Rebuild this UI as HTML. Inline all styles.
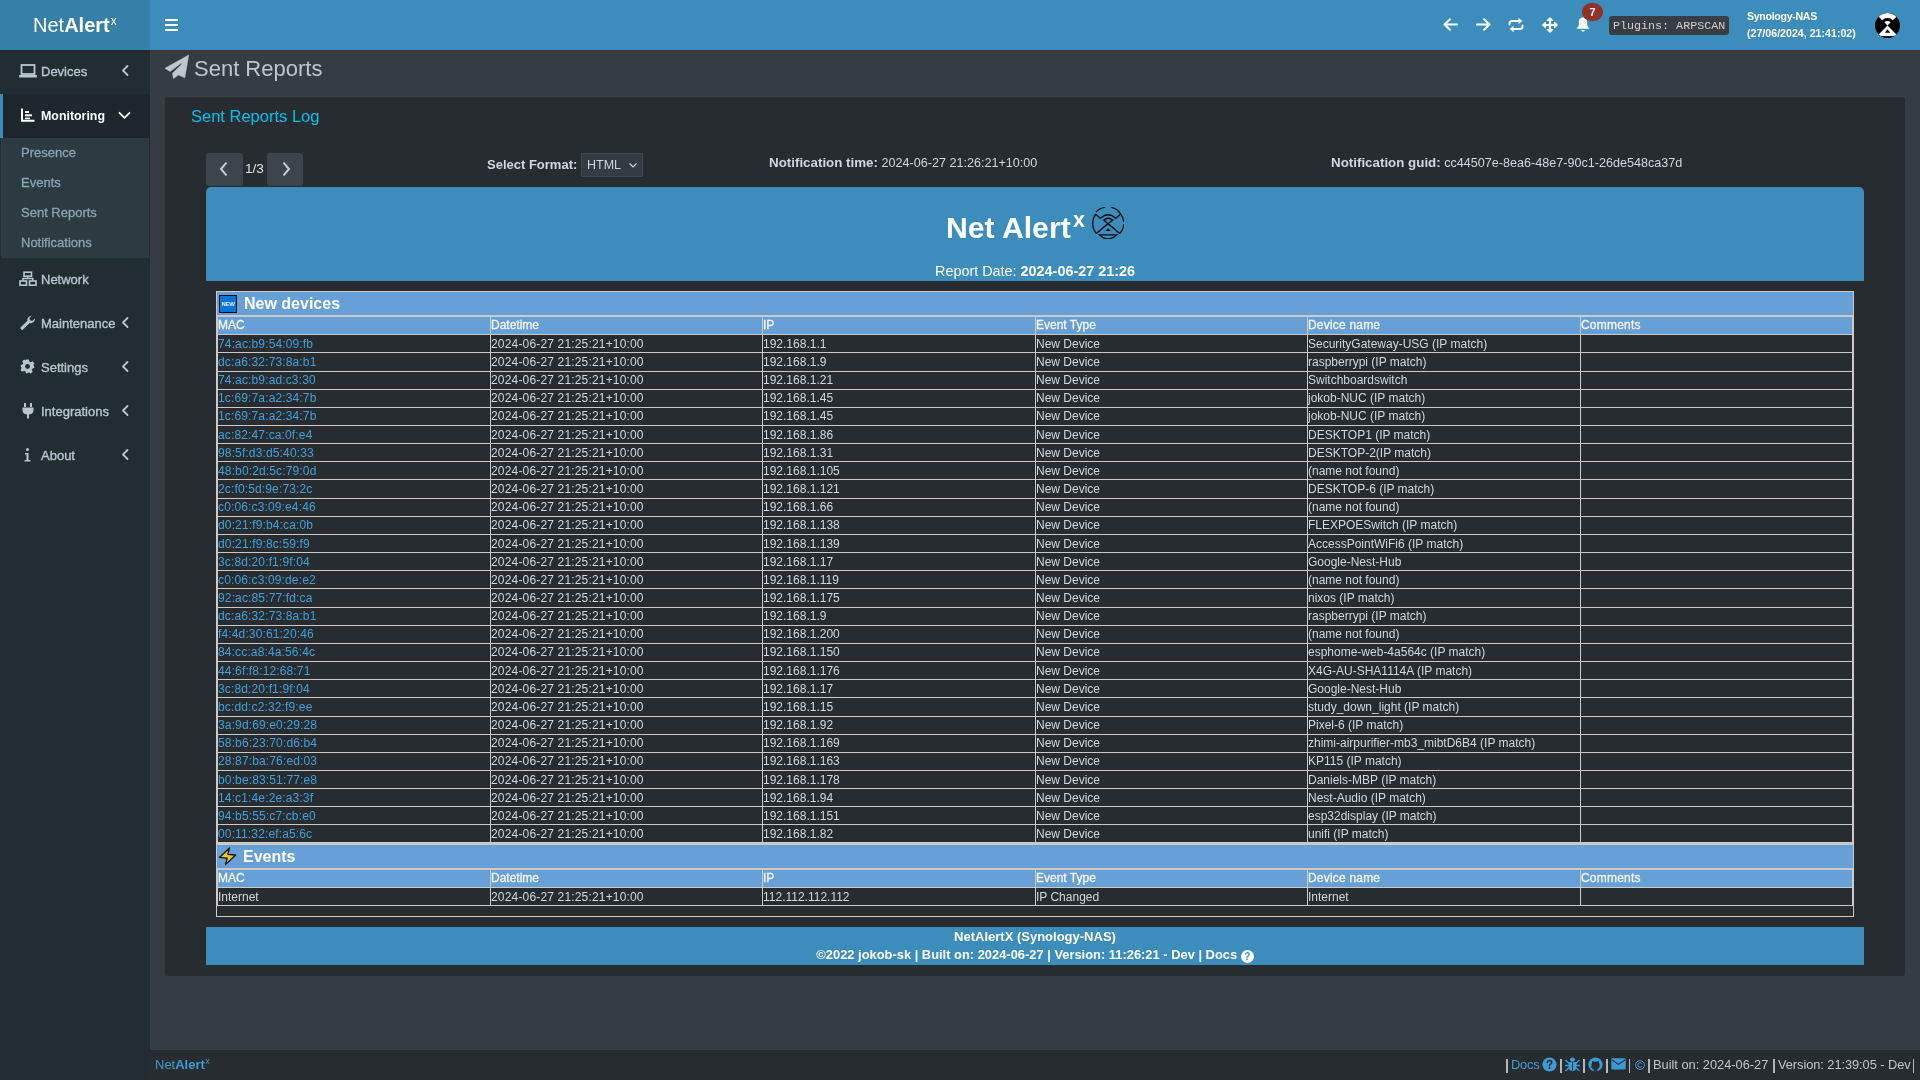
<!DOCTYPE html>
<html><head><meta charset="utf-8"><style>
*{margin:0;padding:0;box-sizing:border-box}
html,body{width:1920px;height:1080px;overflow:hidden;background:#353c42;font-family:"Liberation Sans",sans-serif}
.a{position:absolute;white-space:nowrap}
.side{position:absolute;left:0;top:50px;width:150px;height:1030px;background:#222d32}
.sb{color:#b8c7ce;font-size:13px;-webkit-text-stroke:0.35px #b8c7ce}
.tv{color:#8aa4af;font-size:13px;-webkit-text-stroke:0.3px #8aa4af}
.t td{}
.cell{position:absolute;font-size:12px;color:#d4d8de;line-height:14px;white-space:nowrap;overflow:hidden}
.lnk{color:#40a0d8}
.hl{position:absolute;height:1px;background:#ccc9c6}
.vl{position:absolute;width:1px;background:#ccc9c6}
</style></head><body><div id="w" style="position:absolute;left:0;top:0;width:1920px;height:1080px;will-change:transform">

<div class="a" style="left:0;top:0;width:1920px;height:50px;background:#3c8dbc"></div>
<div class="a" style="left:0;top:0;width:150px;height:50px;background:#367fa9"></div>
<div class="a" style="left:33px;top:12.5px;font-size:20px;color:#fff;line-height:24px">Net<b>Alert</b><span style="font-size:12px;position:relative;top:-7px;margin-left:1px">x</span></div>
<div class="a" style="left:165px;top:19px;width:13px;height:2px;background:#fff"></div>
<div class="a" style="left:165px;top:24px;width:13px;height:2px;background:#fff"></div>
<div class="a" style="left:165px;top:29px;width:13px;height:2px;background:#fff"></div>
<svg class="a" style="left:1443px;top:18px" width="15" height="13" viewBox="0 0 15 13"><path d="M7 1.2 L1.5 6.5 L7 11.8 M1.5 6.5 H14" fill="none" stroke="#fff" stroke-width="2" stroke-linecap="round" stroke-linejoin="round"/></svg>
<svg class="a" style="left:1476px;top:18px" width="15" height="13" viewBox="0 0 15 13"><path d="M8 1.2 L13.5 6.5 L8 11.8 M13.5 6.5 H1" fill="none" stroke="#fff" stroke-width="2" stroke-linecap="round" stroke-linejoin="round"/></svg>
<svg class="a" style="left:1508px;top:17px" width="16" height="16" viewBox="0 0 16 16"><path d="M1.5 7.5 V6.5 Q1.5 4 4 4 H11.5" fill="none" stroke="#fff" stroke-width="2" stroke-linecap="round"/><path d="M10.5 0.8 L14.3 4 L10.5 7.2 Z" fill="#fff"/><path d="M14.5 8.5 V9.5 Q14.5 12 12 12 H4.5" fill="none" stroke="#fff" stroke-width="2" stroke-linecap="round"/><path d="M5.5 8.8 L1.7 12 L5.5 15.2 Z" fill="#fff"/></svg>
<svg class="a" style="left:1542px;top:17px" width="16" height="16" viewBox="0 0 16 16"><path d="M8 2 V14 M2 8 H14" stroke="#fff" stroke-width="2.2"/><path d="M8 0.5 L11 3.5 H5 Z M8 15.5 L11 12.5 H5 Z M0.5 8 L3.5 5 V11 Z M15.5 8 L12.5 5 V11 Z" fill="#fff" stroke="#fff" stroke-width="1" stroke-linejoin="round"/></svg>
<svg class="a" style="left:1576px;top:16px" width="14" height="16" viewBox="0 0 14 16"><path d="M7 1.5 C10 1.5 11.2 4 11.2 6.5 V9.5 L13.5 12.8 H0.5 L2.8 9.5 V6.5 C2.8 4 4 1.5 7 1.5 Z" fill="#fff"/><path d="M5.2 14 H8.8 Q8.5 15.8 7 15.8 Q5.5 15.8 5.2 14 Z" fill="#fff"/></svg>
<div class="a" style="left:1582px;top:3px;width:21px;height:18px;border-radius:10px;background:#923024;color:#fff;font-size:11px;font-weight:bold;text-align:center;line-height:18px">7</div>
<div class="a" style="left:1609px;top:16px;width:120px;height:19px;border-radius:3px;background:#393e44"></div>
<div class="a" style="left:1613px;top:17px;font-family:'Liberation Mono',monospace;font-size:11.7px;color:#d0d0d0;line-height:18px">Plugins: ARPSCAN</div>
<div class="a" style="left:1747px;top:9px;font-size:10.6px;font-weight:bold;color:#fff;line-height:14px;letter-spacing:-0.3px">Synology-NAS</div>
<div class="a" style="left:1747px;top:26px;font-size:10.6px;font-weight:bold;color:#fff;line-height:14px;letter-spacing:0.02px">(27/06/2024, 21:41:02)</div>
<svg class="a" style="left:1875px;top:12.7px" width="25" height="25" viewBox="0 0 25 25"><defs><clipPath id="avc"><circle cx="12.5" cy="12.5" r="12.5"/></clipPath></defs><circle cx="12.5" cy="12.5" r="12.5" fill="#000"/><g clip-path="url(#avc)" fill="#fff"><path d="M3.66 3.66 A12.5 12.5 0 0 1 21.34 3.66 L17.8 7.2 A7.5 7.5 0 0 0 7.2 7.2 Z"/><path d="M12.5 12.5 L9.3 9.3 A4.5 4.5 0 0 1 15.7 9.3 Z"/><path d="M12.5 12.5 L1 24 L0 23 H25 L24 24 Z"/></g><path d="M12.5 16.3 L15.2 19.8 H9.8 Z" fill="#000"/><rect x="0" y="23" width="25" height="2" fill="#000" clip-path="url(#avc)"/></svg>
<div class="side"></div>
<div class="a" style="left:0;top:94px;width:150px;height:44px;background:#1e282c"></div>
<div class="a" style="left:0;top:94px;width:3px;height:44px;background:#3c8dbc"></div>
<div class="a" style="left:1px;top:138px;width:148px;height:120px;background:#2c3b41"></div>
<svg class="a" style="left:19px;top:64px" width="18" height="14" viewBox="0 0 18 14"><rect x="2.5" y="1" width="13" height="9" fill="none" stroke="#b8c7ce" stroke-width="1.8"/><rect x="0" y="11" width="18" height="2.5" rx="1" fill="#b8c7ce"/></svg>
<svg class="a" style="left:21px;top:108px" width="14" height="14" viewBox="0 0 14 14"><path d="M1 0.5 V12.8 H13.5" fill="none" stroke="#fff" stroke-width="2"/><rect x="4" y="3" width="4" height="2" fill="#fff"/><rect x="4" y="6.3" width="7" height="2" fill="#fff"/><rect x="4" y="9.6" width="5" height="1.6" fill="#fff"/></svg>
<svg class="a" style="left:19px;top:271px" width="18" height="15" viewBox="0 0 18 15"><rect x="5" y="1.2" width="7.5" height="4" fill="none" stroke="#b8c7ce" stroke-width="1.6"/><path d="M8.75 5.2 V7.5 M4 9.5 V7.5 H13.75 V9.5" fill="none" stroke="#b8c7ce" stroke-width="1.5"/><rect x="1" y="10" width="6.5" height="4.2" fill="none" stroke="#b8c7ce" stroke-width="1.6"/><rect x="10.5" y="10" width="6.5" height="4.2" fill="none" stroke="#b8c7ce" stroke-width="1.6"/></svg>
<svg class="a" style="left:20px;top:315px" width="16" height="16" viewBox="0 0 16 16"><path d="M15 4.2 A4.3 4.3 0 0 1 9.6 8 L3.3 14.3 A1.6 1.6 0 0 1 1 12 L7.4 5.7 A4.3 4.3 0 0 1 11.6 0.8 L9.4 3 L10 5.3 L12.3 5.9 L14.6 3.6 Z" fill="#b8c7ce"/></svg>
<svg class="a" style="left:20px;top:359px" width="15" height="15" viewBox="0 0 16 16"><path d="M6.6 0.5 H9.4 L9.9 2.7 L11.5 3.5 L13.5 2.4 L15.4 4.4 L14.3 6.3 L15 8 L15.5 9.4 L13.4 10 L12.6 11.6 L13.6 13.6 L11.6 15.5 L9.7 14.4 L8 15 L6.4 15.5 L5.9 13.4 L4.3 12.6 L2.3 13.6 L0.5 11.7 L1.6 9.8 L1 8 L0.5 6.5 L2.6 5.9 L3.4 4.4 L2.4 2.4 L4.4 0.5 L6.3 1.6 Z" fill="#b8c7ce"/><circle cx="8" cy="8" r="2.6" fill="#222d32"/></svg>
<svg class="a" style="left:22px;top:403px" width="12" height="16" viewBox="0 0 12 16"><rect x="2" y="0" width="2" height="4" fill="#b8c7ce"/><rect x="8" y="0" width="2" height="4" fill="#b8c7ce"/><path d="M0.5 4.5 H11.5 V7 Q11.5 11 7 11.5 V15.5 H5 V11.5 Q0.5 11 0.5 7 Z" fill="#b8c7ce"/></svg>
<svg class="a" style="left:24px;top:448px" width="7" height="14" viewBox="0 0 7 14"><circle cx="3.5" cy="1.6" r="1.5" fill="#b8c7ce"/><path d="M1 5 H4.5 V12 H6.5 V13.5 H0.5 V12 H2.5 V6.5 H1 Z" fill="#b8c7ce"/></svg>
<div class="a sb" style="left:41px;top:63.5px;line-height:16px">Devices</div>
<div class="a sb" style="left:41px;top:271.5px;line-height:16px">Network</div>
<div class="a sb" style="left:41px;top:315.5px;line-height:16px">Maintenance</div>
<div class="a sb" style="left:41px;top:359.5px;line-height:16px">Settings</div>
<div class="a sb" style="left:41px;top:403.5px;line-height:16px">Integrations</div>
<div class="a sb" style="left:41px;top:447.5px;line-height:16px">About</div>
<div class="a" style="left:41px;top:107.7px;line-height:16px;font-size:12.4px;font-weight:bold;color:#fff">Monitoring</div>
<svg style="position:absolute;left:121px;top:65px" width="8" height="11" viewBox="0 0 8 11"><path d="M6.5 1 L2 5.5 L6.5 10" fill="none" stroke="#b8c7ce" stroke-width="1.8" stroke-linecap="round" stroke-linejoin="round"/></svg>
<svg style="position:absolute;left:121px;top:317px" width="8" height="11" viewBox="0 0 8 11"><path d="M6.5 1 L2 5.5 L6.5 10" fill="none" stroke="#b8c7ce" stroke-width="1.8" stroke-linecap="round" stroke-linejoin="round"/></svg>
<svg style="position:absolute;left:121px;top:361px" width="8" height="11" viewBox="0 0 8 11"><path d="M6.5 1 L2 5.5 L6.5 10" fill="none" stroke="#b8c7ce" stroke-width="1.8" stroke-linecap="round" stroke-linejoin="round"/></svg>
<svg style="position:absolute;left:121px;top:405px" width="8" height="11" viewBox="0 0 8 11"><path d="M6.5 1 L2 5.5 L6.5 10" fill="none" stroke="#b8c7ce" stroke-width="1.8" stroke-linecap="round" stroke-linejoin="round"/></svg>
<svg style="position:absolute;left:121px;top:449px" width="8" height="11" viewBox="0 0 8 11"><path d="M6.5 1 L2 5.5 L6.5 10" fill="none" stroke="#b8c7ce" stroke-width="1.8" stroke-linecap="round" stroke-linejoin="round"/></svg>
<svg class="a" style="left:118px;top:111px" width="13" height="9" viewBox="0 0 13 9"><path d="M1.5 1.8 L6.5 6.8 L11.5 1.8" fill="none" stroke="#fff" stroke-width="1.8" stroke-linecap="round" stroke-linejoin="round"/></svg>
<div class="a tv" style="left:21px;top:144.8px;line-height:16px">Presence</div>
<div class="a tv" style="left:21px;top:174.8px;line-height:16px">Events</div>
<div class="a tv" style="left:21px;top:204.8px;line-height:16px">Sent Reports</div>
<div class="a tv" style="left:21px;top:234.8px;line-height:16px">Notifications</div>
<svg class="a" style="left:162px;top:52px" width="32" height="32" viewBox="0 0 32 32"><path d="M26.7 3 L3 16.3 L8 19.6 L18.1 11.9 L20 10.5 Z M26.7 3 L22.8 25.8 L16.3 23 L11.4 26.7 L10.5 21.3 L19 13 L20 10.5 Z" fill="#c0c6cc" stroke="#c0c6cc" stroke-width="0.5" stroke-linejoin="round"/></svg>
<div class="a" style="left:194px;top:56px;font-size:22px;color:#bec5cb;line-height:26px">Sent Reports</div>
<div class="a" style="left:165px;top:97px;width:1740px;height:879px;background:#272c30;border-radius:3px"></div>
<div class="a" style="left:191px;top:106px;font-size:16.5px;color:#00c0ef;line-height:20px">Sent Reports Log</div>
<div class="a" style="left:206px;top:153px;width:37px;height:33px;background:#3d444b;border-radius:3px"></div>
<div class="a" style="left:267px;top:153px;width:36px;height:33px;background:#3d444b;border-radius:3px"></div>
<svg class="a" style="left:219px;top:162px" width="10" height="14" viewBox="0 0 10 14"><path d="M7 1.2 L2 7 L7 12.8" fill="none" stroke="#c8cdd2" stroke-width="2" stroke-linecap="round"/></svg>
<svg class="a" style="left:281px;top:162px" width="10" height="14" viewBox="0 0 10 14"><path d="M3 1.2 L8 7 L3 12.8" fill="none" stroke="#c8cdd2" stroke-width="2" stroke-linecap="round"/></svg>
<div class="a" style="left:245px;top:160.5px;font-size:13.6px;color:#dde1e5;line-height:16px">1/3</div>
<div class="a" style="left:487px;top:157px;font-size:13px;font-weight:bold;color:#d2d6de;line-height:16px">Select Format:</div>
<div class="a" style="left:581px;top:153px;width:62px;height:24px;background:#353b42;border:1px solid #40474e"></div>
<div class="a" style="left:587px;top:158px;font-size:12.5px;color:#d2d6de;line-height:15px">HTML</div>
<svg class="a" style="left:628px;top:162px" width="10" height="7" viewBox="0 0 10 7"><path d="M1.5 1.5 L5 5 L8.5 1.5" fill="none" stroke="#d2d6de" stroke-width="1.2"/></svg>
<div class="a" style="left:769px;top:155px;font-size:12.6px;color:#d2d6de;line-height:16px"><b style="font-size:13.35px">Notification time:</b> 2024-06-27 21:26:21+10:00</div>
<div class="a" style="left:1331px;top:155px;font-size:12.6px;color:#d2d6de;line-height:16px"><b style="font-size:13.35px">Notification guid:</b> cc44507e-8ea6-48e7-90c1-26de548ca37d</div>
<div class="a" style="left:206px;top:187px;width:1658px;height:94px;background:#3c8dbc;border-radius:5px 5px 0 0"></div>
<div class="a" style="left:946px;top:210px;font-size:30.2px;font-weight:bold;color:#fff;line-height:36px">Net Alert<span style="font-size:21.5px;position:relative;top:-11.5px;margin-left:2.2px">x</span></div>
<svg class="a" style="left:1092px;top:207px" width="32" height="32" viewBox="0 0 32 32"><g fill="none" stroke="#0d0d0d" stroke-width="1.3"><path d="M13.5 0.2 A15.9 15.9 0 0 0 4 5 M19.2 0.2 A15.9 15.9 0 0 1 28.6 6.8 A15.9 15.9 0 0 1 31.8 15 M31.8 17 A15.9 15.9 0 0 1 27.8 26.5 M4.3 26.5 A15.9 15.9 0 0 1 3.7 7"/><path d="M3.7 7.3 L8.4 11.4 Q16 4 23.7 11.4 L28.6 7.3"/><path d="M16 16.7 L11.8 13 Q16 9.5 20.8 13 Z"/><path d="M4.3 26.5 L16 16.7 L27.8 26.5"/><path d="M7.3 27.8 H24.9 Q16 36 7.3 27.8 Z"/></g><path d="M16 21.2 L19 24.1 H13.3 Z" fill="#111"/></svg>
<div class="a" style="left:935px;top:263px;font-size:14.4px;color:#fff;line-height:17px">Report Date: <b>2024-06-27 21:26</b></div>
<div class="a" style="left:216px;top:291px;width:1638px;height:626px;border:1px solid #ccc9c6"></div>
<div class="a" style="left:217px;top:292px;width:1636px;height:24px;background:#66a0d6"></div>
<div class="hl" style="left:217px;top:315px;width:1636px;height:2px"></div>
<div class="a" style="left:219px;top:294.5px;width:18px;height:18px;background:#0a74d8;border:1.5px solid #0b0b0b;color:#e8f0ff;font-size:6px;font-weight:bold;text-align:center;line-height:16px;letter-spacing:-0.4px">NEW</div>
<div class="a" style="left:244px;top:294px;font-size:16px;font-weight:bold;color:#fff;line-height:19px">New devices</div>
<div class="a" style="left:218px;top:317px;width:1635px;height:17.5px;background:#66a0d6"></div>
<div class="cell" style="left:218.00px;top:318.20px;color:#f6f6f6;-webkit-text-stroke:0.3px #f6f6f6">MAC</div>
<div class="cell" style="left:491.00px;top:318.20px;color:#f6f6f6;-webkit-text-stroke:0.3px #f6f6f6">Datetime</div>
<div class="cell" style="left:763.00px;top:318.20px;color:#f6f6f6;-webkit-text-stroke:0.3px #f6f6f6">IP</div>
<div class="cell" style="left:1036.00px;top:318.20px;color:#f6f6f6;-webkit-text-stroke:0.3px #f6f6f6">Event Type</div>
<div class="cell" style="left:1308.00px;top:318.20px;color:#f6f6f6;-webkit-text-stroke:0.3px #f6f6f6;letter-spacing:0.2px">Device name</div>
<div class="cell" style="left:1581.00px;top:318.20px;color:#f6f6f6;-webkit-text-stroke:0.3px #f6f6f6;letter-spacing:0.2px">Comments</div>
<div class="vl" style="left:490px;top:317px;height:525px"></div>
<div class="vl" style="left:762px;top:317px;height:525px"></div>
<div class="vl" style="left:1035px;top:317px;height:525px"></div>
<div class="vl" style="left:1307px;top:317px;height:525px"></div>
<div class="vl" style="left:1580px;top:317px;height:525px"></div>
<div class="vl" style="left:217px;top:317px;height:525px"></div>
<div class="vl" style="left:1852px;top:317px;height:525px"></div>
<div class="hl" style="left:217px;top:334.20px;width:1636px"></div>
<div class="cell lnk" style="left:218.00px;top:336.80px;letter-spacing:0.14px">74:ac:b9:54:09:fb</div>
<div class="cell" style="left:491.00px;top:336.80px;letter-spacing:0.17px">2024-06-27 21:25:21+10:00</div>
<div class="cell" style="left:763.00px;top:336.80px">192.168.1.1</div>
<div class="cell" style="left:1036.00px;top:336.80px">New Device</div>
<div class="cell" style="left:1308.00px;top:336.80px">SecurityGateway-USG (IP match)</div>
<div class="hl" style="left:217px;top:352.36px;width:1636px"></div>
<div class="cell lnk" style="left:218.00px;top:354.96px;letter-spacing:0.14px">dc:a6:32:73:8a:b1</div>
<div class="cell" style="left:491.00px;top:354.96px;letter-spacing:0.17px">2024-06-27 21:25:21+10:00</div>
<div class="cell" style="left:763.00px;top:354.96px">192.168.1.9</div>
<div class="cell" style="left:1036.00px;top:354.96px">New Device</div>
<div class="cell" style="left:1308.00px;top:354.96px">raspberrypi (IP match)</div>
<div class="hl" style="left:217px;top:370.52px;width:1636px"></div>
<div class="cell lnk" style="left:218.00px;top:373.12px;letter-spacing:0.14px">74:ac:b9:ad:c3:30</div>
<div class="cell" style="left:491.00px;top:373.12px;letter-spacing:0.17px">2024-06-27 21:25:21+10:00</div>
<div class="cell" style="left:763.00px;top:373.12px">192.168.1.21</div>
<div class="cell" style="left:1036.00px;top:373.12px">New Device</div>
<div class="cell" style="left:1308.00px;top:373.12px">Switchboardswitch</div>
<div class="hl" style="left:217px;top:388.67px;width:1636px"></div>
<div class="cell lnk" style="left:218.00px;top:391.27px;letter-spacing:0.14px">1c:69:7a:a2:34:7b</div>
<div class="cell" style="left:491.00px;top:391.27px;letter-spacing:0.17px">2024-06-27 21:25:21+10:00</div>
<div class="cell" style="left:763.00px;top:391.27px">192.168.1.45</div>
<div class="cell" style="left:1036.00px;top:391.27px">New Device</div>
<div class="cell" style="left:1308.00px;top:391.27px">jokob-NUC (IP match)</div>
<div class="hl" style="left:217px;top:406.83px;width:1636px"></div>
<div class="cell lnk" style="left:218.00px;top:409.43px;letter-spacing:0.14px">1c:69:7a:a2:34:7b</div>
<div class="cell" style="left:491.00px;top:409.43px;letter-spacing:0.17px">2024-06-27 21:25:21+10:00</div>
<div class="cell" style="left:763.00px;top:409.43px">192.168.1.45</div>
<div class="cell" style="left:1036.00px;top:409.43px">New Device</div>
<div class="cell" style="left:1308.00px;top:409.43px">jokob-NUC (IP match)</div>
<div class="hl" style="left:217px;top:424.99px;width:1636px"></div>
<div class="cell lnk" style="left:218.00px;top:427.59px;letter-spacing:0.14px">ac:82:47:ca:0f:e4</div>
<div class="cell" style="left:491.00px;top:427.59px;letter-spacing:0.17px">2024-06-27 21:25:21+10:00</div>
<div class="cell" style="left:763.00px;top:427.59px">192.168.1.86</div>
<div class="cell" style="left:1036.00px;top:427.59px">New Device</div>
<div class="cell" style="left:1308.00px;top:427.59px">DESKTOP1 (IP match)</div>
<div class="hl" style="left:217px;top:443.15px;width:1636px"></div>
<div class="cell lnk" style="left:218.00px;top:445.75px;letter-spacing:0.14px">98:5f:d3:d5:40:33</div>
<div class="cell" style="left:491.00px;top:445.75px;letter-spacing:0.17px">2024-06-27 21:25:21+10:00</div>
<div class="cell" style="left:763.00px;top:445.75px">192.168.1.31</div>
<div class="cell" style="left:1036.00px;top:445.75px">New Device</div>
<div class="cell" style="left:1308.00px;top:445.75px">DESKTOP-2(IP match)</div>
<div class="hl" style="left:217px;top:461.31px;width:1636px"></div>
<div class="cell lnk" style="left:218.00px;top:463.91px;letter-spacing:0.14px">48:b0:2d:5c:79:0d</div>
<div class="cell" style="left:491.00px;top:463.91px;letter-spacing:0.17px">2024-06-27 21:25:21+10:00</div>
<div class="cell" style="left:763.00px;top:463.91px">192.168.1.105</div>
<div class="cell" style="left:1036.00px;top:463.91px">New Device</div>
<div class="cell" style="left:1308.00px;top:463.91px">(name not found)</div>
<div class="hl" style="left:217px;top:479.46px;width:1636px"></div>
<div class="cell lnk" style="left:218.00px;top:482.06px;letter-spacing:0.14px">2c:f0:5d:9e:73:2c</div>
<div class="cell" style="left:491.00px;top:482.06px;letter-spacing:0.17px">2024-06-27 21:25:21+10:00</div>
<div class="cell" style="left:763.00px;top:482.06px">192.168.1.121</div>
<div class="cell" style="left:1036.00px;top:482.06px">New Device</div>
<div class="cell" style="left:1308.00px;top:482.06px">DESKTOP-6 (IP match)</div>
<div class="hl" style="left:217px;top:497.62px;width:1636px"></div>
<div class="cell lnk" style="left:218.00px;top:500.22px;letter-spacing:0.14px">c0:06:c3:09:e4:46</div>
<div class="cell" style="left:491.00px;top:500.22px;letter-spacing:0.17px">2024-06-27 21:25:21+10:00</div>
<div class="cell" style="left:763.00px;top:500.22px">192.168.1.66</div>
<div class="cell" style="left:1036.00px;top:500.22px">New Device</div>
<div class="cell" style="left:1308.00px;top:500.22px">(name not found)</div>
<div class="hl" style="left:217px;top:515.78px;width:1636px"></div>
<div class="cell lnk" style="left:218.00px;top:518.38px;letter-spacing:0.14px">d0:21:f9:b4:ca:0b</div>
<div class="cell" style="left:491.00px;top:518.38px;letter-spacing:0.17px">2024-06-27 21:25:21+10:00</div>
<div class="cell" style="left:763.00px;top:518.38px">192.168.1.138</div>
<div class="cell" style="left:1036.00px;top:518.38px">New Device</div>
<div class="cell" style="left:1308.00px;top:518.38px">FLEXPOESwitch (IP match)</div>
<div class="hl" style="left:217px;top:533.94px;width:1636px"></div>
<div class="cell lnk" style="left:218.00px;top:536.54px;letter-spacing:0.14px">d0:21:f9:8c:59:f9</div>
<div class="cell" style="left:491.00px;top:536.54px;letter-spacing:0.17px">2024-06-27 21:25:21+10:00</div>
<div class="cell" style="left:763.00px;top:536.54px">192.168.1.139</div>
<div class="cell" style="left:1036.00px;top:536.54px">New Device</div>
<div class="cell" style="left:1308.00px;top:536.54px">AccessPointWiFi6 (IP match)</div>
<div class="hl" style="left:217px;top:552.10px;width:1636px"></div>
<div class="cell lnk" style="left:218.00px;top:554.70px;letter-spacing:0.14px">3c:8d:20:f1:9f:04</div>
<div class="cell" style="left:491.00px;top:554.70px;letter-spacing:0.17px">2024-06-27 21:25:21+10:00</div>
<div class="cell" style="left:763.00px;top:554.70px">192.168.1.17</div>
<div class="cell" style="left:1036.00px;top:554.70px">New Device</div>
<div class="cell" style="left:1308.00px;top:554.70px">Google-Nest-Hub</div>
<div class="hl" style="left:217px;top:570.25px;width:1636px"></div>
<div class="cell lnk" style="left:218.00px;top:572.85px;letter-spacing:0.14px">c0:06:c3:09:de:e2</div>
<div class="cell" style="left:491.00px;top:572.85px;letter-spacing:0.17px">2024-06-27 21:25:21+10:00</div>
<div class="cell" style="left:763.00px;top:572.85px">192.168.1.119</div>
<div class="cell" style="left:1036.00px;top:572.85px">New Device</div>
<div class="cell" style="left:1308.00px;top:572.85px">(name not found)</div>
<div class="hl" style="left:217px;top:588.41px;width:1636px"></div>
<div class="cell lnk" style="left:218.00px;top:591.01px;letter-spacing:0.14px">92:ac:85:77:fd:ca</div>
<div class="cell" style="left:491.00px;top:591.01px;letter-spacing:0.17px">2024-06-27 21:25:21+10:00</div>
<div class="cell" style="left:763.00px;top:591.01px">192.168.1.175</div>
<div class="cell" style="left:1036.00px;top:591.01px">New Device</div>
<div class="cell" style="left:1308.00px;top:591.01px">nixos (IP match)</div>
<div class="hl" style="left:217px;top:606.57px;width:1636px"></div>
<div class="cell lnk" style="left:218.00px;top:609.17px;letter-spacing:0.14px">dc:a6:32:73:8a:b1</div>
<div class="cell" style="left:491.00px;top:609.17px;letter-spacing:0.17px">2024-06-27 21:25:21+10:00</div>
<div class="cell" style="left:763.00px;top:609.17px">192.168.1.9</div>
<div class="cell" style="left:1036.00px;top:609.17px">New Device</div>
<div class="cell" style="left:1308.00px;top:609.17px">raspberrypi (IP match)</div>
<div class="hl" style="left:217px;top:624.73px;width:1636px"></div>
<div class="cell lnk" style="left:218.00px;top:627.33px;letter-spacing:0.14px">f4:4d:30:61:20:46</div>
<div class="cell" style="left:491.00px;top:627.33px;letter-spacing:0.17px">2024-06-27 21:25:21+10:00</div>
<div class="cell" style="left:763.00px;top:627.33px">192.168.1.200</div>
<div class="cell" style="left:1036.00px;top:627.33px">New Device</div>
<div class="cell" style="left:1308.00px;top:627.33px">(name not found)</div>
<div class="hl" style="left:217px;top:642.89px;width:1636px"></div>
<div class="cell lnk" style="left:218.00px;top:645.49px;letter-spacing:0.14px">84:cc:a8:4a:56:4c</div>
<div class="cell" style="left:491.00px;top:645.49px;letter-spacing:0.17px">2024-06-27 21:25:21+10:00</div>
<div class="cell" style="left:763.00px;top:645.49px">192.168.1.150</div>
<div class="cell" style="left:1036.00px;top:645.49px">New Device</div>
<div class="cell" style="left:1308.00px;top:645.49px">esphome-web-4a564c (IP match)</div>
<div class="hl" style="left:217px;top:661.04px;width:1636px"></div>
<div class="cell lnk" style="left:218.00px;top:663.64px;letter-spacing:0.14px">44:6f:f8:12:68:71</div>
<div class="cell" style="left:491.00px;top:663.64px;letter-spacing:0.17px">2024-06-27 21:25:21+10:00</div>
<div class="cell" style="left:763.00px;top:663.64px">192.168.1.176</div>
<div class="cell" style="left:1036.00px;top:663.64px">New Device</div>
<div class="cell" style="left:1308.00px;top:663.64px">X4G-AU-SHA1114A (IP match)</div>
<div class="hl" style="left:217px;top:679.20px;width:1636px"></div>
<div class="cell lnk" style="left:218.00px;top:681.80px;letter-spacing:0.14px">3c:8d:20:f1:9f:04</div>
<div class="cell" style="left:491.00px;top:681.80px;letter-spacing:0.17px">2024-06-27 21:25:21+10:00</div>
<div class="cell" style="left:763.00px;top:681.80px">192.168.1.17</div>
<div class="cell" style="left:1036.00px;top:681.80px">New Device</div>
<div class="cell" style="left:1308.00px;top:681.80px">Google-Nest-Hub</div>
<div class="hl" style="left:217px;top:697.36px;width:1636px"></div>
<div class="cell lnk" style="left:218.00px;top:699.96px;letter-spacing:0.14px">bc:dd:c2:32:f9:ee</div>
<div class="cell" style="left:491.00px;top:699.96px;letter-spacing:0.17px">2024-06-27 21:25:21+10:00</div>
<div class="cell" style="left:763.00px;top:699.96px">192.168.1.15</div>
<div class="cell" style="left:1036.00px;top:699.96px">New Device</div>
<div class="cell" style="left:1308.00px;top:699.96px">study_down_light (IP match)</div>
<div class="hl" style="left:217px;top:715.52px;width:1636px"></div>
<div class="cell lnk" style="left:218.00px;top:718.12px;letter-spacing:0.14px">3a:9d:69:e0:29:28</div>
<div class="cell" style="left:491.00px;top:718.12px;letter-spacing:0.17px">2024-06-27 21:25:21+10:00</div>
<div class="cell" style="left:763.00px;top:718.12px">192.168.1.92</div>
<div class="cell" style="left:1036.00px;top:718.12px">New Device</div>
<div class="cell" style="left:1308.00px;top:718.12px">Pixel-6 (IP match)</div>
<div class="hl" style="left:217px;top:733.68px;width:1636px"></div>
<div class="cell lnk" style="left:218.00px;top:736.28px;letter-spacing:0.14px">58:b6:23:70:d6:b4</div>
<div class="cell" style="left:491.00px;top:736.28px;letter-spacing:0.17px">2024-06-27 21:25:21+10:00</div>
<div class="cell" style="left:763.00px;top:736.28px">192.168.1.169</div>
<div class="cell" style="left:1036.00px;top:736.28px">New Device</div>
<div class="cell" style="left:1308.00px;top:736.28px">zhimi-airpurifier-mb3_mibtD6B4 (IP match)</div>
<div class="hl" style="left:217px;top:751.83px;width:1636px"></div>
<div class="cell lnk" style="left:218.00px;top:754.43px;letter-spacing:0.14px">28:87:ba:76:ed:03</div>
<div class="cell" style="left:491.00px;top:754.43px;letter-spacing:0.17px">2024-06-27 21:25:21+10:00</div>
<div class="cell" style="left:763.00px;top:754.43px">192.168.1.163</div>
<div class="cell" style="left:1036.00px;top:754.43px">New Device</div>
<div class="cell" style="left:1308.00px;top:754.43px">KP115 (IP match)</div>
<div class="hl" style="left:217px;top:769.99px;width:1636px"></div>
<div class="cell lnk" style="left:218.00px;top:772.59px;letter-spacing:0.14px">b0:be:83:51:77:e8</div>
<div class="cell" style="left:491.00px;top:772.59px;letter-spacing:0.17px">2024-06-27 21:25:21+10:00</div>
<div class="cell" style="left:763.00px;top:772.59px">192.168.1.178</div>
<div class="cell" style="left:1036.00px;top:772.59px">New Device</div>
<div class="cell" style="left:1308.00px;top:772.59px">Daniels-MBP (IP match)</div>
<div class="hl" style="left:217px;top:788.15px;width:1636px"></div>
<div class="cell lnk" style="left:218.00px;top:790.75px;letter-spacing:0.14px">14:c1:4e:2e:a3:3f</div>
<div class="cell" style="left:491.00px;top:790.75px;letter-spacing:0.17px">2024-06-27 21:25:21+10:00</div>
<div class="cell" style="left:763.00px;top:790.75px">192.168.1.94</div>
<div class="cell" style="left:1036.00px;top:790.75px">New Device</div>
<div class="cell" style="left:1308.00px;top:790.75px">Nest-Audio (IP match)</div>
<div class="hl" style="left:217px;top:806.31px;width:1636px"></div>
<div class="cell lnk" style="left:218.00px;top:808.91px;letter-spacing:0.14px">94:b5:55:c7:cb:e0</div>
<div class="cell" style="left:491.00px;top:808.91px;letter-spacing:0.17px">2024-06-27 21:25:21+10:00</div>
<div class="cell" style="left:763.00px;top:808.91px">192.168.1.151</div>
<div class="cell" style="left:1036.00px;top:808.91px">New Device</div>
<div class="cell" style="left:1308.00px;top:808.91px">esp32display (IP match)</div>
<div class="hl" style="left:217px;top:824.47px;width:1636px"></div>
<div class="cell lnk" style="left:218.00px;top:827.07px;letter-spacing:0.14px">00:11:32:ef:a5:6c</div>
<div class="cell" style="left:491.00px;top:827.07px;letter-spacing:0.17px">2024-06-27 21:25:21+10:00</div>
<div class="cell" style="left:763.00px;top:827.07px">192.168.1.82</div>
<div class="cell" style="left:1036.00px;top:827.07px">New Device</div>
<div class="cell" style="left:1308.00px;top:827.07px">unifi (IP match)</div>
<div class="a" style="left:217px;top:842px;width:1636px;height:3px;background:#ccc9c6"></div>
<div class="a" style="left:217px;top:845px;width:1636px;height:23px;background:#66a0d6"></div>
<div class="a" style="left:217px;top:868px;width:1636px;height:2px;background:#ccc9c6"></div>
<svg class="a" style="left:214px;top:840px" width="26" height="28" viewBox="0 0 26 28"><path d="M15.5 8 L5.4 17.4 L13.2 18.1 L11.5 24.6 L21.6 15 L13.8 14.3 Z" fill="#f7c230" stroke="#111" stroke-width="1.3" stroke-linejoin="round"/></svg>
<div class="a" style="left:243px;top:847px;font-size:16px;font-weight:bold;color:#fff;line-height:19px">Events</div>
<div class="a" style="left:218px;top:870px;width:1635px;height:17px;background:#66a0d6"></div>
<div class="cell" style="left:218.00px;top:871.20px;color:#f6f6f6;-webkit-text-stroke:0.3px #f6f6f6">MAC</div>
<div class="cell" style="left:491.00px;top:871.20px;color:#f6f6f6;-webkit-text-stroke:0.3px #f6f6f6">Datetime</div>
<div class="cell" style="left:763.00px;top:871.20px;color:#f6f6f6;-webkit-text-stroke:0.3px #f6f6f6">IP</div>
<div class="cell" style="left:1036.00px;top:871.20px;color:#f6f6f6;-webkit-text-stroke:0.3px #f6f6f6">Event Type</div>
<div class="cell" style="left:1308.00px;top:871.20px;color:#f6f6f6;-webkit-text-stroke:0.3px #f6f6f6;letter-spacing:0.2px">Device name</div>
<div class="cell" style="left:1581.00px;top:871.20px;color:#f6f6f6;-webkit-text-stroke:0.3px #f6f6f6;letter-spacing:0.2px">Comments</div>
<div class="hl" style="left:217px;top:887px;width:1636px"></div>
<div class="vl" style="left:490px;top:870px;height:35px"></div>
<div class="vl" style="left:762px;top:870px;height:35px"></div>
<div class="vl" style="left:1035px;top:870px;height:35px"></div>
<div class="vl" style="left:1307px;top:870px;height:35px"></div>
<div class="vl" style="left:1580px;top:870px;height:35px"></div>
<div class="vl" style="left:217px;top:870px;height:35px"></div>
<div class="vl" style="left:1852px;top:870px;height:35px"></div>
<div class="cell" style="left:218.00px;top:890px">Internet</div>
<div class="cell" style="left:491.00px;top:890px;letter-spacing:0.17px">2024-06-27 21:25:21+10:00</div>
<div class="cell" style="left:763.00px;top:890px">112.112.112.112</div>
<div class="cell" style="left:1036.00px;top:890px">IP Changed</div>
<div class="cell" style="left:1308.00px;top:890px">Internet</div>
<div class="hl" style="left:217px;top:904.5px;width:1636px;height:1.5px"></div>
<div class="a" style="left:206px;top:927px;width:1658px;height:38px;background:#3c8dbc"></div>
<div class="a" style="left:206px;top:929px;width:1658px;text-align:center;font-size:13px;font-weight:bold;color:#fff;line-height:16px;letter-spacing:0px">NetAlertX (Synology-NAS)</div>
<div class="a" style="left:206px;top:947px;width:1658px;text-align:center;font-size:12.9px;font-weight:bold;color:#fff;line-height:16px;letter-spacing:0px">©2022 jokob-sk | Built on: 2024-06-27 | Version: 11:26:21 - Dev | Docs <span style="display:inline-block;width:13px;height:13px;border-radius:50%;background:#fff;color:#3c8dbc;font-size:10px;line-height:13px;text-align:center;vertical-align:-1px">?</span></div>
<div class="a" style="left:150px;top:1050px;width:1770px;height:30px;background:#272c30"></div>
<div class="a" style="left:155px;top:1057px;font-size:13px;color:#3c9bd3;line-height:16px">Net<b>Alert</b><span style="font-size:9px;position:relative;top:-5px;margin-left:0.5px">x</span></div>
<div class="a" style="left:1506px;top:1059px;width:1.6px;height:14px;background:#b4b8bc"></div>
<div class="a" style="left:1560px;top:1059px;width:1.6px;height:14px;background:#b4b8bc"></div>
<div class="a" style="left:1583px;top:1059px;width:1.6px;height:14px;background:#b4b8bc"></div>
<div class="a" style="left:1606px;top:1059px;width:1.6px;height:14px;background:#b4b8bc"></div>
<div class="a" style="left:1628.7px;top:1059px;width:1.6px;height:14px;background:#b4b8bc"></div>
<div class="a" style="left:1648px;top:1059px;width:1.6px;height:14px;background:#b4b8bc"></div>
<div class="a" style="left:1773px;top:1059px;width:1.6px;height:14px;background:#b4b8bc"></div>
<div class="a" style="left:1912.5px;top:1059px;width:1.6px;height:14px;background:#b4b8bc"></div>
<div class="a" style="left:1511px;top:1056.5px;font-size:12.8px;color:#3c9bd3;line-height:16px;letter-spacing:-0.2px">Docs</div>
<svg class="a" style="left:1542px;top:1056.5px" width="15" height="15" viewBox="0 0 15 15"><circle cx="7.5" cy="7.5" r="7.1" fill="#3c9bd3"/><path d="M5.3 5.6 Q5.4 3.6 7.5 3.6 Q9.7 3.6 9.7 5.5 Q9.7 6.7 8.3 7.4 Q7.5 7.8 7.5 8.8" fill="none" stroke="#272c30" stroke-width="1.5" stroke-linecap="round"/><circle cx="7.5" cy="11" r="0.95" fill="#272c30"/></svg>
<svg class="a" style="left:1565px;top:1056.5px" width="15" height="15" viewBox="0 0 15 15"><g fill="#3c9bd3"><ellipse cx="7.5" cy="2.6" rx="2.6" ry="2.1"/><path d="M3.6 5 H11.4 V10 Q11.4 13.8 7.5 14.2 Q3.6 13.8 3.6 10 Z"/></g><g stroke="#3c9bd3" stroke-width="1.5" stroke-linecap="round" fill="none"><path d="M1 3.5 L3.6 6 M14 3.5 L11.4 6 M0.6 8.5 H3.6 M14.4 8.5 H11.4 M1 13.5 L3.8 11 M14 13.5 L11.2 11"/></g><path d="M7.5 5 V14" stroke="#272c30" stroke-width="0.9"/></svg>
<svg class="a" style="left:1588px;top:1056.5px" width="15" height="15" viewBox="0 0 15 15"><circle cx="7.5" cy="7.5" r="7.1" fill="#3c9bd3"/><path d="M5.6 14.4 V11.8 Q4.2 11.6 3.7 10.4 Q3.3 9.4 3.4 8.3 Q3.3 7 4.1 6.1 Q3.8 5 4.3 4 Q5.3 4 6.3 4.8 Q7.5 4.4 8.7 4.8 Q9.7 4 10.7 4 Q11.2 5 10.9 6.1 Q11.7 7 11.6 8.3 Q11.7 9.4 11.3 10.4 Q10.8 11.6 9.4 11.8 V14.4 Z" fill="#272c30"/><path d="M2.8 10.2 Q4 10.2 4.6 11.3 Q5.1 12.1 5.6 12.2" fill="none" stroke="#272c30" stroke-width="0.7"/></svg>
<svg class="a" style="left:1610.5px;top:1058px" width="15" height="12" viewBox="0 0 15 12"><rect x="0.3" y="0.3" width="14.4" height="11.2" rx="1.3" fill="#3c9bd3"/><path d="M0.6 1.6 L7.5 6.4 L14.4 1.6" fill="none" stroke="#272c30" stroke-width="1.1"/></svg>
<svg class="a" style="left:1634.5px;top:1059.5px" width="10" height="10" viewBox="0 0 10 10"><circle cx="5" cy="5" r="4.4" fill="none" stroke="#3c9bd3" stroke-width="1"/><path d="M6.6 3.6 Q6 2.7 5 2.7 Q2.8 2.8 2.8 5 Q2.8 7.3 5 7.3 Q6 7.3 6.6 6.4" fill="none" stroke="#3c9bd3" stroke-width="1"/></svg>
<div class="a" style="left:1653px;top:1057px;font-size:12.8px;color:#c3c8cd;line-height:16px">Built on: 2024-06-27</div>
<div class="a" style="left:1778px;top:1057px;font-size:12.8px;color:#c3c8cd;line-height:16px;letter-spacing:-0.05px">Version: 21:39:05 - Dev</div>
</div></body></html>
